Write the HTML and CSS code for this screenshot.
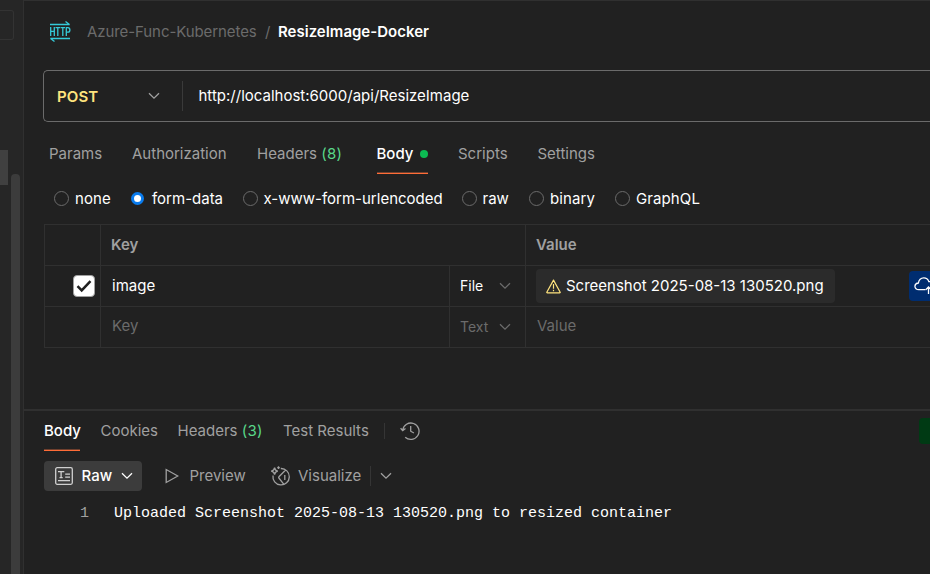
FILE: index.html
```html
<!DOCTYPE html>
<html lang="en">
<head>
<meta charset="utf-8">
<title>ResizeImage-Docker</title>
<link rel="stylesheet" href="styles.css">
</head>
<body>
<div class="app">
  <aside class="sidebar">
    <div class="side-box"></div>
    <div class="side-scroll"><div class="side-active"></div><div class="side-thumb"></div></div>
  </aside>
  <main class="main">
    <header class="crumbs">
      <svg class="http" width="22" height="22" viewBox="0 0 22 22"><path d="M1 3.5h19.7M16.5.5l4 3M1.3 17.5H21M1.5 17.5l4 3"/><path d="M1.7 6v9M5.3 6v9M1.7 10.4h3.6M6.5 6.6h4.6M8.8 6.6V15M11.6 6.6h4.4M13.8 6.6V15M17.3 15V6.6h1.6q2 0 2 2.3t-2 2.3h-1.6"/></svg>
      <span class="parent">Azure-Func-Kubernetes</span><span class="slash">/</span><h1>ResizeImage-Docker</h1>
    </header>
    <div class="url">
      <button class="method"><span>POST</span><svg width="12" height="8" viewBox="0 0 12 8"><path d="M1 1.2l5 5 5-5"/></svg></button>
      <span class="address">http://localhost:6000/api/ResizeImage</span>
    </div>
    <nav class="tabs">
      <a class="t-params">Params</a><a class="t-auth">Authorization</a><a class="t-headers">Headers <i>(8)</i></a><a class="t-body active">Body<b class="dot"></b></a><a class="t-scripts">Scripts</a><a>Settings</a>
    </nav>
    <div class="radios">
      <label class="r-none"><span class="radio"></span>none</label>
      <label class="r-form"><span class="radio on"></span>form-data</label>
      <label class="r-url"><span class="radio"></span>x-www-form-urlencoded</label>
      <label class="r-raw"><span class="radio"></span>raw</label>
      <label class="r-binary"><span class="radio"></span>binary</label>
      <label class="r-graphql"><span class="radio"></span>GraphQL</label>
    </div>
    <div class="table">
      <div class="row head"><div></div><div class="wide">Key</div><div>Value</div></div>
      <div class="row">
        <div class="check-cell"><span class="check"><svg width="16" height="14" viewBox="0 0 16 14"><path d="M1.5 7.2l4.2 4.2L14.5 2.2"/></svg></span></div>
        <div class="key">image</div>
        <div class="type"><span>File</span><svg width="12" height="8" viewBox="0 0 12 8"><path d="M1 1.2l5 5 5-5"/></svg></div>
        <div class="value"><span class="file"><svg class="warn" width="15" height="15" viewBox="0 0 15 15"><path d="M7.5 1.1L14.2 13.2q.2.7-.6.7H1.4q-.8 0-.6-.7zM7.5 5v4.7M7.5 10.8v1.5"/></svg>Screenshot 2025-08-13 130520.png</span>
          <span class="upload"><svg width="25" height="18" viewBox="0 0 25 18"><path d="M11 12.7H4.8q-3.6 0-3.9-3.4.2-3 3.5-3.3Q5.2 1 9.8.9q3.7 0 5 3.6 4.8.1 5.2 4M14.5 17v-7M11.5 13l3-3 3 3"/></svg></span></div>
      </div>
      <div class="row empty">
        <div></div><div class="key"><span class="placeholder">Key</span></div>
        <div class="type"><span>Text</span><svg width="12" height="8" viewBox="0 0 12 8"><path d="M1 1.2l5 5 5-5"/></svg></div>
        <div class="value"><span class="placeholder">Value</span></div>
      </div>
    </div>
    <section class="response">
      <div class="response-top">
        <nav class="rtabs"><a class="b-body active">Body</a><a class="b-cookies">Cookies</a><a class="b-headers">Headers <i>(3)</i></a><a class="b-tests">Test Results</a></nav>
        <span class="history"><svg width="20" height="20" viewBox="0 0 20 20"><path d="M2.7 9.2A8.2 8.2 0 1 1 5.2 16.2M.6 7.3l2.1 2.4L5.5 7.4M10.7 5v5.2l3.2 1.8"/></svg></span>
        <div class="status"></div>
      </div>
      <div class="views">
        <button class="raw"><svg class="text-icon" width="18" height="18" viewBox="0 0 18 18"><rect x=".7" y=".7" width="16.6" height="16.6" rx="1.5"/><path d="M3 4.6h6.3M6.1 4.6v6M4.5 10.6h3.2M10.2 7.1H15M10.2 10.2H15M3 13.6h12"/></svg><span>Raw</span><svg class="chev" width="12" height="8" viewBox="0 0 12 8"><path d="M1 1.2l5 5 5-5"/></svg></button>
        <svg class="play" width="14" height="16" viewBox="0 0 14 16"><path d="M1.2 1.5v13L12.8 8z"/></svg><span class="preview">Preview</span>
        <svg class="vis" width="21" height="21" viewBox="0 0 21 21"><path d="M10.8 2.5A8.2 8.2 0 1 1 3 9.5M13.5 17.8L8.9 12q-.5-.6 0-1.2L15.4 4.3M14.8 9v5M4.6 1.6q.3 3 3.2 3.5-2.9.5-3.2 3.5Q4.2 5.6 1.2 5.1q3-.5 3.4-3.5zM8.5.3v2.6M7.2 1.6h2.6"/></svg><span class="visualize">Visualize</span>
        <span class="more"><svg width="12" height="8" viewBox="0 0 12 8"><path d="M1 1.2l5 5 5-5"/></svg></span>
      </div>
      <div class="code"><span class="line">1</span><code>Uploaded Screenshot 2025-08-13 130520.png to resized container</code></div>
    </section>
  </main>
</div>
</body>
</html>
```
FILE: styles.css
```css
* { box-sizing: border-box; }
body { margin: 0; background: #212121; color: #fff; font: 15px/20px Inter, "Liberation Sans", sans-serif; }
button { margin: 0; padding: 0; border: 0; background: none; color: inherit; font: inherit; }
i { font-style: normal; color: #59d88a; letter-spacing: .3px; }
svg { flex: none; fill: none; stroke: #a0a0a0; stroke-width: 1.3; }
.app { display: flex; width: 930px; height: 574px; overflow: hidden; }
.sidebar { width: 23px; flex: none; background: #262626; }
.side-box { width: 14px; height: 30px; margin-top: 10px; border: 1px solid #333; border-left: 0; border-radius: 0 3px 3px 0; }
.side-scroll { display: flex; margin-top: 110px; height: 424px; }
.side-active { width: 8px; height: 35px; background: #404040; }
.side-thumb { width: 9px; margin: 24px 0 0 3px; background: #3c3c3c; border-radius: 4px 4px 0 0; }
.main { width: 907px; flex: none; border-left: 1px solid #303030; border-top: 1px solid #303030; white-space: nowrap; overflow: hidden; }

.crumbs { display: flex; align-items: center; height: 61px; padding-left: 25px; color: #6b6b6b; }
.http { margin-right: 16px; stroke: #35cad8; stroke-width: 1.3; }
.parent { width: 178px; letter-spacing: -.08px; }
.slash { width: 13px; }
h1 { margin: 0; font-size: 15px; font-weight: 600; line-height: 20px; color: #fff; }

.url { display: flex; align-items: center; height: 52px; margin: 8px 0 0 19px; border: 1px solid #6b6b6b; border-right: 0; border-radius: 5px 0 0 5px; }
.method { display: flex; align-items: center; width: 139px; height: 30px; padding-left: 13px; border-right: 1px solid #3a3a3a; color: #ffe47e; font-weight: 600; }
.method span { width: 91px; padding-top: 2px; text-align: left; letter-spacing: .1px; }
.address { padding-left: 15.5px; }

.tabs { display: flex; height: 52px; padding: 12px 0 0 25px; color: #a0a0a0; }
.tabs a { height: 40px; padding-top: 10px; flex: none; }
.tabs .active, .rtabs .active { color: #fff; font-weight: 500; border-bottom: 1px solid #ff6c37; box-shadow: inset 0 -1px #70402e; }
.t-params { width: 83px; }
.t-auth { width: 125px; }
.t-headers { width: 119.5px; }
.tabs .t-body { display: flex; align-items: center; justify-content: space-between; width: 51px; margin-right: 30.5px; padding-bottom: 9px; }
.t-scripts { width: 79.5px; }
.dot { width: 8px; height: 8px; border-radius: 50%; background: #0cbb52; }

.radios { display: flex; align-items: center; height: 50px; padding-left: 30px; }
.radios label { display: flex; align-items: center; flex: none; }
.radio { width: 15px; height: 15px; margin: -1px 6px 0 0; border: 1px solid #6b6b6b; border-radius: 50%; flex: none; }
.on { width: 13px; height: 13px; margin: -2px 8px 0 1px; border: 3px solid #097bed; background: #fff; }
.r-none { width: 76px; }
.r-none, .r-graphql, .r-binary { letter-spacing: .1px; }
.r-form { width: 112.5px; }
.r-url { width: 219px; }
.r-raw { width: 67.5px; }
.r-binary { width: 86px; }

.table { margin-left: 20px; border-top: 1px solid #303030; border-left: 1px solid #303030; }
.row { display: grid; grid-template-columns: 56px 349px 76px 1fr; height: 41px; border-bottom: 1px solid #303030; }
.row > div { display: flex; align-items: center; border-right: 1px solid #303030; min-width: 0; }
.row > div:last-child { border-right: 0; }
.head { color: #a0a0a0; font-weight: 600; }
.head div { padding-left: 10px; }
.wide { grid-column: span 2; }
.check-cell { padding-left: 28px; }
.check { display: grid; place-items: center; width: 22px; height: 22px; border: 1px solid #a0a0a0; border-radius: 4px; background: #fff; }
.check svg { stroke: #212121; stroke-width: 2.5; }
.key { padding-left: 11px; }
.type { padding-left: 10px; }
.type span { width: 39px; font-size: 14px; }
.type svg { stroke: #6b6b6b; }
.empty { color: #6b6b6b; }
.value { justify-content: space-between; padding-left: 10px; }
.file { display: flex; align-items: center; gap: 5px; width: 299px; height: 34px; padding-left: 10px; border-radius: 4px; background: #2b2b2b; }
.warn { stroke: #ffe47e; stroke-width: 1.2; stroke-linejoin: round; }
.upload { display: flex; align-items: center; width: 21px; height: 30px; padding-left: 5px; border-radius: 4px 0 0 4px; background: #002d70; overflow: hidden; }
.upload svg { stroke: #fff; margin-top: -1px; }
.placeholder { padding-bottom: 2px; }
.value .placeholder { padding-left: 1px; }

.response { margin-top: 61px; border-top: 2px solid #303030; }
.response-top { display: flex; align-items: center; height: 40px; }
.rtabs { display: flex; height: 40px; padding-left: 20px; color: #a0a0a0; }
.rtabs a { padding-top: 10px; }
.b-body { width: 36px; margin-right: 20.5px; }
.b-cookies { width: 77px; }
.b-headers { width: 105.5px; }
.b-tests { width: 101px; }
.history { display: flex; align-items: center; height: 16px; padding-left: 15px; border-left: 1px solid #353535; }
.status { width: 11px; height: 26px; margin-left: auto; border-radius: 4px 0 0 4px; background: #003a14; }
.views { display: flex; align-items: center; height: 30px; margin-top: 10px; padding-left: 20px; color: #a0a0a0; }
.raw { display: flex; align-items: center; width: 98px; height: 30px; padding-left: 11px; border-radius: 4px; background: #3c3c3c; color: #fff; font-weight: 500; }
.raw span { width: 39.5px; margin-left: 8.5px; text-align: left; }
.raw .chev { stroke: #fff; }
.raw .text-icon { stroke: #d0d0d0; }
.play { margin: 0 10.5px 0 23px; }
.preview { width: 80.5px; }
.vis { margin-right: 7px; }
.visualize { width: 72px; }
.more { display: flex; align-items: center; height: 20px; padding-left: 9px; border-left: 1px solid #353535; }
.code { display: flex; height: 40px; padding-top: 6px; align-items: center; font: 15px/20px "Liberation Mono", monospace; }
.code code { font: inherit; }
.line { width: 90px; padding-left: 56px; color: #a0a0a0; }
```
